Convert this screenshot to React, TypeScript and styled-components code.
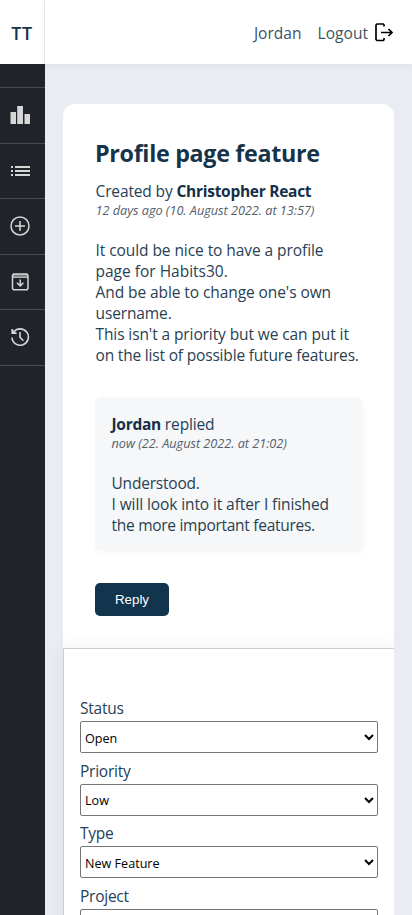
import React from 'react';
import styled, { createGlobalStyle } from 'styled-components';

const GlobalStyle = createGlobalStyle`
  * { box-sizing: border-box; }
  html, body { margin: 0; height: 100%; overflow: hidden; }
  body {
    background: #e9edf2;
    color: #23415a;
    font: 400 15.5px/21px "Open Sans", "Noto Sans", sans-serif;
  }
  h1, p { margin: 0; }
`;

const Page = styled.div`
  display: grid;
  grid-template: 64px 851px / 45px 1fr;
  height: 915px;
  overflow: hidden;
`;

const Logo = styled.div`
  display: flex;
  align-items: center;
  justify-content: center;
  padding-top: 3px;
  background: #fff;
  border-right: 1px solid #ebeef0;
  color: #12344d;
  font-size: 18px;
  font-weight: 600;
  letter-spacing: 0.6px;
`;

const Header = styled.header`
  display: flex;
  align-items: center;
  justify-content: flex-end;
  gap: 16px;
  padding: 3px 18px 0 0;
  background: #fff;
  box-shadow: 0 2px 6px rgba(18, 40, 60, 0.06);
  color: #3b5366;
`;

const LogoutLink = styled.div`
  display: flex;
  align-items: center;
  gap: 6px;
  svg { display: block; margin-top: -3px; }
`;

const HeaderText = styled.span`
  letter-spacing: 0.04px;
`;

const Sidebar = styled.nav`
  position: relative;
  z-index: 1;
  padding-top: 23px;
  background: #20232a;
`;

const NavItem = styled.a`
  display: flex;
  align-items: center;
  justify-content: center;
  height: 55.5px;
  padding-right: 5px;
  border-top: 1px solid #474a50;
  color: #d6d6d6;
  &:last-child { height: 56.5px; border-bottom: 1px solid #474a50; }
`;

const Main = styled.main`
  padding: 40px 18px 0;
  overflow: hidden;
`;

const Card = styled.article`
  background: #fff;
  border-radius: 12px 12px 0 0;
`;

const Ticket = styled.section`
  height: 544px;
  padding: 31px 32px 0 32px;
`;

const Title = styled.h1`
  font-size: 23.3px;
  line-height: 36px;
  font-weight: 700;
  color: #173349;
  letter-spacing: -0.32px;
  white-space: nowrap;
`;

const Author = styled.p<{ $top?: number }>`
  margin-top: ${(p) => p.$top ?? 0}px;
  padding-left: 0.5px;
  white-space: nowrap;
  letter-spacing: -0.13px;
  b { font-weight: 700; color: #142f46; letter-spacing: -0.28px; }
`;

const Timestamp = styled.p`
  padding-left: 0.5px;
  font-size: 12.7px;
  line-height: 17px;
  font-style: italic;
  color: #53606b;
  white-space: nowrap;
  letter-spacing: -0.02px;
`;

const Body = styled.p`
  margin-top: 21px;
  padding-left: 0.5px;
  white-space: nowrap;
  color: #293f52;
`;

const Line = styled.span<{ $spacing: number }>`
  display: block;
  letter-spacing: ${(p) => p.$spacing}px;
`;

const Comment = styled.section`
  height: 154px;
  margin-top: 31px;
  padding: 17px 16px 0;
  background: #f5f7f9;
  border-radius: 6px;
  box-shadow: 2px 3px 6px rgba(0, 0, 0, 0.03);
`;

const ReplyButton = styled.button`
  display: block;
  width: 74px;
  height: 33px;
  margin-top: 32px;
  padding: 0;
  border: 0;
  border-radius: 5px;
  background: #12344d;
  color: #fff;
  font: 400 13.333px "Liberation Sans", sans-serif;
`;

const Details = styled.form`
  display: flex;
  flex-direction: column;
  gap: 9.6px;
  height: 320px;
  padding: 50px 16px 0;
  background: #fff;
  border-top: 1px solid #ccc;
  border-left: 1px solid #ccc;
  box-shadow: 0 0 20px rgba(18, 40, 60, 0.07);
  clip-path: inset(-20px 0 0 -20px);
`;

const Field = styled.label`
  display: flex;
  flex-direction: column;
  gap: 2px;
  flex: none;
  height: 53px;
  line-height: 19px;
  letter-spacing: -0.25px;
`;

const Select = styled.select`
  flex: none;
  width: 100%;
  height: 32px;
  margin-top: 1px;
  padding: 2px 0 0;
  background: #fff;
  border: 1px solid #767676;
  border-radius: 2px;
  color: #000;
  font: 400 12.6px "Open Sans", sans-serif;
`;

const PodiumIcon = () => (
  <svg width="20" height="20" viewBox="0 0 20 20" fill="currentColor">
    <path d="M.5 7H6v12H.5zM7.200 1H13v18H7.200zM14.500 9H20v10h-5.500z" />
  </svg>
);

const ListIcon = () => (
  <svg width="20" height="20" viewBox="0 0 20 20" fill="currentColor">
    <path d="M1 5h2v2H1zM1 9h2v2H1zM1 13h2v2H1zM5 5h15v2H5zM5 9h15v2H5zM5 13h15v2H5z" />
  </svg>
);

const AddIcon = () => (
  <svg width="20" height="20" viewBox="0 0 20 20" fill="none" stroke="currentColor" strokeWidth="1.5">
    <circle cx="10" cy="10" r="9" />
    <path d="M10 5v10M5 10h10" />
  </svg>
);

const ArchiveIcon = () => (
  <svg width="20" height="20" viewBox="0 0 20 20" fill="none" stroke="currentColor" strokeWidth="1.5">
    <path d="M2.500 3.500h15" strokeWidth="3" opacity="0.5" />
    <path d="M3.500 2h13.500l1 1.500V16.500l-1 1.200H3.500l-1-1.200V3.500z" />
    <path d="M2.500 5.300h15.500" strokeWidth="1" />
    <path d="M10.200 7.500v6M7 10.800l3.200 3.200 3.200-3.200" />
  </svg>
);

const HistoryIcon = () => (
  <svg width="20" height="20" viewBox="0 0 20 20" fill="none" stroke="currentColor" strokeWidth="1.6">
    <path d="M2 10.500a8.200 8.200 0 1 0 1.500-5.200M2.200 2v4.300h4.300M10 5v5.200l3.300 3.600" />
    <path d="M2 2v4.800h4.800z" fill="currentColor" stroke="none" />
  </svg>
);

const LogoutIcon = () => (
  <svg width="20" height="20" viewBox="0 0 20 20" fill="none" stroke="#000" strokeWidth="1.7">
    <path d="M10 4.500V2.800L9.300 2H3l-1 1v14.500l1 1h6.300l.7-.8V16" />
    <path d="M7 10.500h11M14.500 7l3.500 3.500-3.500 3.500" />
  </svg>
);

const navIcons = [PodiumIcon, ListIcon, AddIcon, ArchiveIcon, HistoryIcon];

const ticketLines = [
  { text: 'It could be nice to have a profile', spacing: -0.07 },
  { text: 'page for Habits30.', spacing: 0 },
  { text: "And be able to change one's own", spacing: -0.08 },
  { text: 'username.', spacing: -0.12 },
  { text: "This isn't a priority but we can put it", spacing: -0.1 },
  { text: 'on the list of possible future features.', spacing: -0.18 },
];

const replyLines = [
  { text: 'Understood.', spacing: -0.2 },
  { text: 'I will look into it after I finished', spacing: -0.1 },
  { text: 'the more important features.', spacing: -0.28 },
];

const fields = [
  { label: 'Status', value: 'Open' },
  { label: 'Priority', value: 'Low' },
  { label: 'Type', value: 'New Feature' },
  { label: 'Project', value: 'Habits30' },
];

export default function App() {
  return (
    <>
      <GlobalStyle />
      <Page>
        <Logo>TT</Logo>
        <Header>
          <HeaderText>Jordan</HeaderText>
          <LogoutLink>
            <HeaderText>Logout</HeaderText>
            <LogoutIcon />
          </LogoutLink>
        </Header>
        <Sidebar>
          {navIcons.map((Icon, i) => (
            <NavItem key={i}><Icon /></NavItem>
          ))}
        </Sidebar>
        <Main>
          <Card>
            <Ticket>
              <Title>Profile page feature</Title>
              <Author $top={10}>Created by <b>Christopher React</b></Author>
              <Timestamp>12 days ago (10. August 2022. at 13:57)</Timestamp>
              <Body>
                {ticketLines.map((l) => (
                  <Line key={l.text} $spacing={l.spacing}>{l.text}</Line>
                ))}
              </Body>
              <Comment>
                <Author><b>Jordan</b> replied</Author>
                <Timestamp>now (22. August 2022. at 21:02)</Timestamp>
                <Body>
                  {replyLines.map((l) => (
                    <Line key={l.text} $spacing={l.spacing}>{l.text}</Line>
                  ))}
                </Body>
              </Comment>
              <ReplyButton>Reply</ReplyButton>
            </Ticket>
            <Details>
              {fields.map((f) => (
                <Field key={f.label}>
                  {f.label}
                  <Select defaultValue={f.value}>
                    <option>{f.value}</option>
                  </Select>
                </Field>
              ))}
            </Details>
          </Card>
        </Main>
      </Page>
    </>
  );
}
